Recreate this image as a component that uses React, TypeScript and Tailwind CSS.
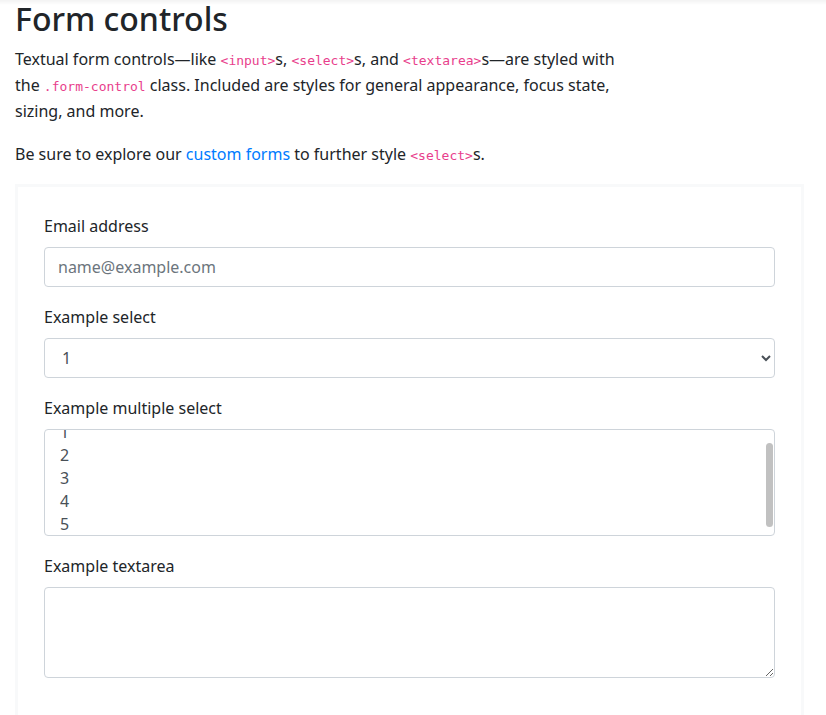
export default function App() {
  const code = "font-['DejaVu_Sans_Mono',monospace] text-[13px] leading-none text-[#e83e8c]";

  return (
    <div className="relative min-h-screen bg-white font-['Noto_Sans',sans-serif] text-[16px] text-[#212529]">
      {/* header shadow peeking in at the top */}
      <div className="pointer-events-none absolute inset-x-0 top-0 h-[5px] bg-gradient-to-b from-black/[0.05] to-transparent" />

      <div className="pl-[15px] pr-[22px]">
        <h2 className="mb-2 text-[32px] font-medium leading-[1.2]">Form controls</h2>

        <p className="mb-[17px] max-w-[640px] leading-[26px]">
          Textual form controls—like <code className={code}>&lt;input&gt;</code>s,{" "}
          <code className={code}>&lt;select&gt;</code>s, and <code className={code}>&lt;textarea&gt;</code>s—are styled with
          <br />
          the <code className={code}>.form-control</code> class. Included are styles for general appearance, focus state,
          <br />
          sizing, and more.
        </p>

        <p className="mb-[17px] leading-[26px]">
          Be sure to explore our <a className="text-[#007bff]">custom forms</a> to further style{" "}
          <code className={code}>&lt;select&gt;</code>s.
        </p>

        <div className="border-[3px] border-[#f8f9fa] p-[26px]">
          <div className="mb-[17px]">
            <label className="mb-2 block leading-[26px]">Email address</label>
            <input
              type="email"
              placeholder="name@example.com"
              className="block h-[40px] w-full rounded-[4px] border border-[#ced4da] px-[13px] text-[#495057] outline-none placeholder:text-[#6c757d]"
            />
          </div>

          <div className="mb-[17px]">
            <label className="mb-2 block leading-[26px]">Example select</label>
            <select className="block h-[40px] w-full rounded-[4px] border border-[#ced4da] pl-[13px] pr-[3px] text-[#495057] outline-none">
              <option>1</option>
              <option>2</option>
              <option>3</option>
              <option>4</option>
              <option>5</option>
            </select>
          </div>

          <div className="mb-[17px]">
            <label className="mb-2 block leading-[26px]">Example multiple select</label>
            <div className="relative h-[107px] overflow-hidden rounded-[4px] border border-[#ced4da] text-[#495057]">
              <div className="-mt-[9px] pl-[15px] leading-[23px]">
                {["1", "2", "3", "4", "5"].map((n) => (
                  <div key={n}>{n}</div>
                ))}
              </div>
              <div className="absolute right-px top-[13px] h-[84px] w-[7px] rounded-full bg-[#c1c1c1]" />
            </div>
          </div>

          <div className="mb-[17px]">
            <label className="mb-2 block leading-[26px]">Example textarea</label>
            <textarea
              rows={3}
              className="block h-[91px] w-full rounded-[4px] border border-[#ced4da] px-[13px] py-[6px] text-[#495057] outline-none"
            />
          </div>
        </div>
      </div>
    </div>
  );
}
